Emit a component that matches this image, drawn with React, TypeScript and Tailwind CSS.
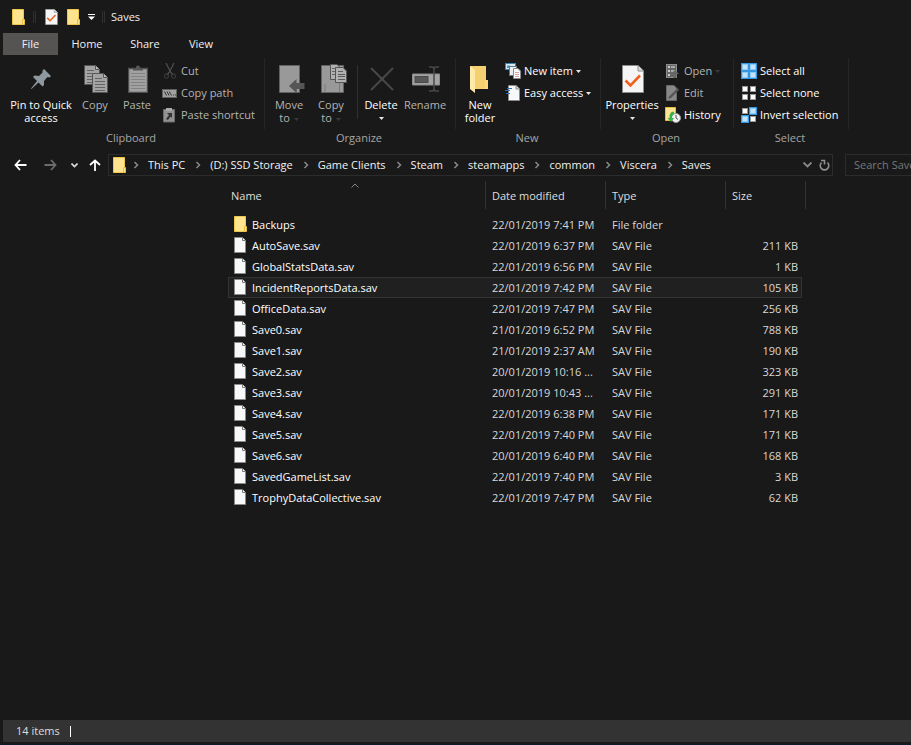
import { Fragment, type ReactNode } from "react";

const FONT = "font-['Open_Sans','Noto_Sans',sans-serif]";

function FolderIcon() {
  return (
    <svg width="14" height="16" viewBox="0 0 14 16" className="shrink-0" aria-hidden="true">
      <path d="M.5.5H11.500V15.500H.5Z" fill="#ffe490" stroke="#efc54a" />
      <path d="M10.500 10.500H12.500V15.500H10.500Z" fill="#ffe490" stroke="#e9bf40" />
    </svg>
  );
}

function FileIcon() {
  return (
    <svg width="12" height="16" viewBox="0 0 12 16" className="shrink-0" aria-hidden="true">
      <path d="M.5.5H8L11.500 3.500V15.500H.5Z" fill="#f7f8fa" stroke="#8a8a8a" />
      <path d="M8.500.5V3.500H11.500" fill="#fff" stroke="#777" />
    </svg>
  );
}

function CheckDocIcon({ width, height }: { width: number; height: number }) {
  return (
    <svg width={width} height={height} viewBox="0 0 22 28" className="shrink-0" aria-hidden="true">
      <path d="M.5.5H16L21.500 6V27.500H.5Z" fill="#f5f5f5" stroke="#8c8c8c" />
      <path d="M16 .5V6H21.500" fill="#ddd" stroke="#8c8c8c" />
      <path d="M3.500 15.500L8.500 20.500L18 10.500" fill="none" stroke="#f1601d" strokeWidth="2.600" />
    </svg>
  );
}

function PinIcon() {
  return (
    <svg width="24" height="22" viewBox="0 0 24 22" aria-hidden="true">
      <path d="M14 1L21 8L19.500 9.500L17.500 9L14 13L14 17L12.500 18.500L8.500 14.500L1.500 21L1 20.500L7 13L3 9L4.500 7.500L9 8L12.500 4.500L12.500 2.500Z" fill="#8d999f" />
    </svg>
  );
}

function Page({ x, y }: { x: number; y: number }) {
  return (
    <g transform={`translate(${x} ${y})`}>
      <path d="M.5.5H11.500L15.500 4.500V19.500H.5Z" fill="#a3a3a3" stroke="#555" />
      <path d="M11.500.5V4.500H15.500" fill="#bbb" stroke="#555" />
      <path d="M3 5.500H10M3 8.500H13M3 11.500H13M3 14.500H13M3 17.500H13" stroke="#646464" />
    </g>
  );
}

function CopyIcon() {
  return (
    <svg width="24" height="28" viewBox="0 0 24 28" aria-hidden="true">
      <Page x={0} y={0} />
      <Page x={8} y={8} />
    </svg>
  );
}

function PasteIcon() {
  return (
    <svg width="20" height="28" viewBox="0 0 20 28" aria-hidden="true">
      <path d="M.5 3.500H19.500V27.500H.5Z" fill="#a1a1a1" stroke="#4f4f4f" strokeWidth="1.500" />
      <path d="M5 5.500V3.500H8V1.500Q10 -.5 12 1.500V3.500H15V5.500Z" fill="#555" />
      <path d="M3 8.500H17M3 11.500H17M3 14.500H17M3 17.500H17M3 20.500H17M3 23.500H17" stroke="#828282" />
    </svg>
  );
}

function MoveToIcon() {
  return (
    <svg width="30" height="28" viewBox="-4 0 30 28" aria-hidden="true">
      <path d="M.5.5H20.500V27.500H.5Z" fill="#999" stroke="#626262" />
      <path d="M17.500 19V27" stroke="#777" />
      <path d="M10 21L17.500 14V18H25.500V24H17.500V28Z" fill="#555" />
    </svg>
  );
}

function CopyToIcon() {
  return (
    <svg width="30" height="30" viewBox="-4 0 30 30" aria-hidden="true">
      <path d="M.5 1.500H22.500V28.500H.5Z" fill="#999" stroke="#626262" />
      <path d="M4 20V28M18.500 19V28" stroke="#7b7b7b" />
      <path d="M9.500.5H16L19.500 4V15.500H9.500Z" fill="#b0b0b0" stroke="#555" />
      <path d="M11 4.500H15M11 7.500H15M11 10.500H15" stroke="#666" />
      <path d="M14.500 3.500H22L25.500 7V18.500H14.500Z" fill="#b0b0b0" stroke="#555" />
      <path d="M17 7.500H22M17 10.500H24M17 12.500H24M17 15.500H24" stroke="#5c5c5c" />
    </svg>
  );
}

function DeleteIcon() {
  return (
    <svg width="24" height="24" viewBox="0 0 24 24" aria-hidden="true">
      <path d="M1 1L23 23M23 1L1 23" stroke="#484848" strokeWidth="2" />
      <circle cx="12" cy="12" r="2" fill="#484848" />
    </svg>
  );
}

function RenameIcon() {
  return (
    <svg width="28" height="26" viewBox="0 0 28 26" aria-hidden="true">
      <path d="M.5 8H27.500V19H.5Z" fill="#a3a3a3" stroke="#8a8a8a" />
      <rect x="3" y="10.500" width="13" height="6" fill="#585858" stroke="#4a4a4a" />
      <path d="M17 1H20Q22 1 22 3.500Q22 1 24 1H27M22 3V23M17 25H20Q22 25 22 22.500Q22 25 24 25H27" fill="none" stroke="#484848" strokeWidth="1.500" />
    </svg>
  );
}

function NewFolderIcon() {
  return (
    <svg width="22" height="28" viewBox="0 0 22 28" aria-hidden="true">
      <path d="M0 1H16V15H18V24H0Z" fill="#f5d070" />
      <path d="M0 1L5 5V28L0 24Z" fill="#ffe9a6" />
      <path d="M16 15H18V24H15V16Z" fill="#ffd978" />
    </svg>
  );
}

function CutIcon() {
  return (
    <svg width="16" height="16" viewBox="0 0 16 16" aria-hidden="true">
      <path d="M4 0L8.500 9L11 12M12 0L7.500 9L5 12" fill="none" stroke="#505050" strokeWidth="1.200" />
      <ellipse cx="4.500" cy="13" rx="2" ry="2.300" fill="none" stroke="#404040" />
      <ellipse cx="11.500" cy="13" rx="2" ry="2.300" fill="none" stroke="#404040" />
    </svg>
  );
}

function CopyPathIcon() {
  return (
    <svg width="16" height="16" viewBox="0 0 16 16" aria-hidden="true">
      <rect x=".5" y="4.500" width="14" height="8" fill="#a0a0a0" stroke="#606060" />
      <path d="M2.500 6.500L4.500 10.500M5 6.500L7 10.500M7.500 6.500L8.500 9.500" stroke="#333" />
      <path d="M9 10H10M11 10H12M13 10H14" stroke="#333" />
    </svg>
  );
}

function PasteShortcutIcon() {
  return (
    <svg width="16" height="16" viewBox="0 0 16 16" aria-hidden="true">
      <path d="M1.500 2.500H12.500V15H1.500Z" fill="#929292" stroke="#6b6b6b" />
      <path d="M4 1H10V4H4Z" fill="#aaa" />
      <path d="M5 6H10V11L8.500 9.500L6 13L4 12L7 8Z" fill="#333" />
    </svg>
  );
}

function NewItemIcon() {
  return (
    <svg width="16" height="16" viewBox="0 0 16 16" aria-hidden="true">
      <rect x=".5" y=".5" width="10" height="6" fill="#d8e9f4" stroke="#3e82b0" />
      <path d="M2 2.500H5V5H2Z" fill="#4795c8" />
      <rect x="4.500" y="3.500" width="7" height="9" fill="#e8eef2" stroke="#667885" />
      <path d="M8.500 5.500H13L15.500 8V15.500H8.500Z" fill="#fafafa" stroke="#8a8a8a" />
      <path d="M10 9.500H14M10 11.500H14M10 13.500H14" stroke="#d5a0a7" />
    </svg>
  );
}

function EasyAccessIcon() {
  return (
    <svg width="16" height="16" viewBox="0 0 16 16" aria-hidden="true">
      <path d="M3.500.5H11L14.500 4V15.500H3.500Z" fill="#f7f8fa" stroke="#8c8c8c" />
      <path d="M11 .5V4H14.500" fill="#ddd" stroke="#8c8c8c" />
      <path d="M2 3.500H7M0 5.500H5M1 8.500H5" stroke="#2d70ad" />
    </svg>
  );
}

function OpenIcon() {
  return (
    <svg width="16" height="16" viewBox="0 0 16 16" aria-hidden="true">
      <rect x="1.500" y="1.500" width="10" height="13" fill="#666" stroke="#8d8d8d" />
      <path d="M3 4H5M3 8H5M3 12H5" stroke="#ccc" strokeWidth="2" />
      <path d="M6 4H10M6 8H10" stroke="#aaa" strokeWidth="2" />
      <path d="M10 7L14 11H11.500V15H8.500V11H6Z" fill="#666" />
    </svg>
  );
}

function EditIcon() {
  return (
    <svg width="16" height="16" viewBox="0 0 16 16" aria-hidden="true">
      <path d="M1.500.5H9L11.500 3V15.500H1.500Z" fill="#888" stroke="#696969" />
      <path d="M13 3L14 5L6 13L3.500 14L4 11.500Z" fill="#555" />
    </svg>
  );
}

function HistoryIcon() {
  return (
    <svg width="16" height="16" viewBox="0 0 16 16" aria-hidden="true">
      <path d="M.5.5H10.500V13.500H.5Z" fill="#ffe490" stroke="#e9bd38" />
      <circle cx="11" cy="11" r="4.500" fill="#f2f2f2" stroke="#999" />
      <path d="M11 8V11L13 12.500" fill="none" stroke="#555" />
      <path d="M8.500 4.500Q4 5 4.500 11H2.500L6 15L9 11H7Q6.500 7.500 9.500 6.500Z" fill="#31b54a" />
    </svg>
  );
}

function SelectIcon({ picked }: { picked: "all" | "none" | "some" }) {
  const tiles = [[0, 0], [8, 0], [0, 8], [8, 8]];
  return (
    <svg width="16" height="16" viewBox="0 0 16 16" aria-hidden="true" shapeRendering="crispEdges">
      {tiles.map(([x, y], i) => {
        const on = picked === "all" || (picked === "some" && (i === 1 || i === 2));
        return (
          <g key={i}>
            {on && <rect x={x} y={y} width="8" height="8" fill="#3397e2" />}
            <rect x={x + 1} y={y + 1} width="6" height="6" fill={on ? "#8fcaf5" : "#999"} />
            <rect x={x + 2} y={y + 2} width="4" height="4" fill={on ? "#c4e4fc" : "#fff"} />
          </g>
        );
      })}
    </svg>
  );
}

function Caret({ dim = false }: { dim?: boolean }) {
  return (
    <svg width="5" height="3" viewBox="0 0 5 3" className={`inline-block ${dim ? "text-[#3a3a3a]" : "text-[#e8e8e8]"}`} aria-hidden="true">
      <path d="M0 0H5L2.500 3Z" fill="currentColor" />
    </svg>
  );
}

function Big({ icon, lines, width, off = false, caret }: { icon: ReactNode; lines: string[]; width: string; off?: boolean; caret?: "own" | "side" }) {
  return (
    <button type="button" className={`flex shrink-0 flex-col items-center whitespace-nowrap pt-[5px] leading-[13px] ${width} ${off ? "text-[#b4b4b4]" : "text-white"}`}>
      <span className="mb-[3px] flex h-8 items-center justify-center pl-[2px]">{icon}</span>
      <span className="text-center">
        {lines.map((line, i) => (
          <Fragment key={line}>
            {i > 0 && <br />}
            {line}
          </Fragment>
        ))}
        {caret === "side" && <span className="ml-1"><Caret dim /></span>}
      </span>
      {caret === "own" && <span className="flex h-[14px] items-center"><Caret /></span>}
    </button>
  );
}

function Small({ icon, label, off = false, caret }: { icon: ReactNode; label: string; off?: boolean; caret?: "dim" | "lit" }) {
  return (
    <button type="button" className={`flex h-[22px] items-center gap-[3px] whitespace-nowrap ${off ? "text-[#b4b4b4]" : "text-white"}`}>
      {icon}
      <span>{label}</span>
      {caret && <span className="flex"><Caret dim={caret === "dim"} /></span>}
    </button>
  );
}

function Group({ name, width, children }: { name: string; width: string; children: ReactNode }) {
  return (
    <section aria-label={name} className={`shrink-0 ${width}`}>
      <div className="flex h-[71px] border-r border-[#262626]">{children}</div>
      <div className="mt-px h-4 pr-[3px] text-center leading-4 text-[#a6a6a6]">{name}</div>
    </section>
  );
}

function Chevron() {
  return (
    <svg width="25" height="8" viewBox="0 0 25 8" className="shrink-0" aria-hidden="true">
      <path d="M11.500 1L14.500 4L11.500 7" fill="none" stroke="#888" strokeWidth="1.500" />
    </svg>
  );
}

const crumbs = ["This PC", "(D:) SSD Storage", "Game Clients", "Steam", "steamapps", "common", "Viscera", "Saves"];

const files = [
  ["Backups", "22/01/2019 7:41 PM", "File folder", ""],
  ["AutoSave.sav", "22/01/2019 6:37 PM", "SAV File", "211 KB"],
  ["GlobalStatsData.sav", "22/01/2019 6:56 PM", "SAV File", "1 KB"],
  ["IncidentReportsData.sav", "22/01/2019 7:42 PM", "SAV File", "105 KB"],
  ["OfficeData.sav", "22/01/2019 7:47 PM", "SAV File", "256 KB"],
  ["Save0.sav", "21/01/2019 6:52 PM", "SAV File", "788 KB"],
  ["Save1.sav", "21/01/2019 2:37 AM", "SAV File", "190 KB"],
  ["Save2.sav", "20/01/2019 10:16 ...", "SAV File", "323 KB"],
  ["Save3.sav", "20/01/2019 10:43 ...", "SAV File", "291 KB"],
  ["Save4.sav", "22/01/2019 6:38 PM", "SAV File", "171 KB"],
  ["Save5.sav", "22/01/2019 7:40 PM", "SAV File", "171 KB"],
  ["Save6.sav", "20/01/2019 6:40 PM", "SAV File", "168 KB"],
  ["SavedGameList.sav", "22/01/2019 7:40 PM", "SAV File", "3 KB"],
  ["TrophyDataCollective.sav", "22/01/2019 7:47 PM", "SAV File", "62 KB"],
];

function TitleBar() {
  return (
    <header className="flex h-[33px] items-center pl-3">
      <FolderIcon />
      <span className="ml-[7px] h-3 w-[3px] border-x border-[#303030]" />
      <button type="button" aria-label="Properties" className="ml-[9px]"><CheckDocIcon width={13} height={16} /></button>
      <button type="button" aria-label="New folder" className="ml-[9px]"><FolderIcon /></button>
      <button type="button" aria-label="Customize toolbar" className="ml-[7px]">
        <svg width="7" height="6" viewBox="0 0 7 6" aria-hidden="true"><path d="M0 .5H7" stroke="#fff" /><path d="M0 2.500H7L3.500 6Z" fill="#fff" /></svg>
      </button>
      <span className="ml-[7px] h-3 w-[3px] border-x border-[#303030]" />
      <h1 className="ml-[6px]">Saves</h1>
    </header>
  );
}

function Ribbon() {
  return (
    <div className="flex h-[95px] pt-[3px]">
      <Group name="Clipboard" width="w-[265px]">
        <div className="flex pl-[6px]">
          <Big width="w-[70px]" icon={<PinIcon />} lines={["Pin to Quick", "access"]} />
          <Big width="w-[38px]" icon={<CopyIcon />} lines={["Copy"]} off />
          <Big width="w-[46px]" icon={<PasteIcon />} lines={["Paste"]} off />
        </div>
        <div className="pl-[2px] pt-[2px]">
          <Small icon={<CutIcon />} label="Cut" off />
          <Small icon={<CopyPathIcon />} label="Copy path" off />
          <Small icon={<PasteShortcutIcon />} label="Paste shortcut" off />
        </div>
      </Group>
      <Group name="Organize" width="w-[191px]">
        <div className="flex pl-[3px]">
          <Big width="w-[42px]" icon={<MoveToIcon />} lines={["Move", "to"]} caret="side" off />
          <Big width="w-[42px]" icon={<CopyToIcon />} lines={["Copy", "to"]} caret="side" off />
          <span className="ml-[5px] mt-[7px] h-[54px] w-px bg-[#303030]" />
          <Big width="w-[46px]" icon={<DeleteIcon />} lines={["Delete"]} caret="own" />
          <Big width="w-[42px]" icon={<RenameIcon />} lines={["Rename"]} off />
        </div>
      </Group>
      <Group name="New" width="w-[145px]">
        <div className="pl-[3px]">
          <Big width="w-[42px]" icon={<NewFolderIcon />} lines={["New", "folder"]} />
        </div>
        <div className="pl-1 pt-[2px]">
          <Small icon={<NewItemIcon />} label="New item" caret="lit" />
          <Small icon={<EasyAccessIcon />} label="Easy access" caret="lit" />
        </div>
      </Group>
      <Group name="Open" width="w-[133px]">
        <div className="pl-1">
          <Big width="w-[54px]" icon={<CheckDocIcon width={22} height={28} />} lines={["Properties"]} caret="own" />
        </div>
        <div className="pl-[6px] pt-[2px]">
          <Small icon={<OpenIcon />} label="Open" caret="dim" off />
          <Small icon={<EditIcon />} label="Edit" off />
          <Small icon={<HistoryIcon />} label="History" />
        </div>
      </Group>
      <Group name="Select" width="w-[115px]">
        <div className="pl-[7px] pt-[2px]">
          <Small icon={<SelectIcon picked="all" />} label="Select all" />
          <Small icon={<SelectIcon picked="none" />} label="Select none" />
          <Small icon={<SelectIcon picked="some" />} label="Invert selection" />
        </div>
      </Group>
    </div>
  );
}

function AddressBar() {
  return (
    <div className="mt-1 flex h-[22px] items-center">
      <div className="flex w-[108px] shrink-0 items-center pl-[14px]">
        <button type="button" aria-label="Back">
          <svg width="13" height="12" viewBox="0 0 13 12" aria-hidden="true"><path d="M6 1L1.500 6L6 11M1.500 6H12.500" fill="none" stroke="#fff" strokeWidth="1.800" /></svg>
        </button>
        <button type="button" aria-label="Forward" className="ml-[17px]">
          <svg width="13" height="12" viewBox="0 0 13 12" aria-hidden="true"><path d="M7 1L11.500 6L7 11M11.500 6H.5" fill="none" stroke="#6c6c6c" strokeWidth="1.800" /></svg>
        </button>
        <button type="button" aria-label="Recent locations" className="ml-[14px]">
          <svg width="7" height="5" viewBox="0 0 7 5" aria-hidden="true"><path d="M.5.5L3.500 3.500L6.500.5" fill="none" stroke="#ddd" strokeWidth="1.600" /></svg>
        </button>
        <button type="button" aria-label="Up" className="ml-[11px]">
          <svg width="12" height="12" viewBox="0 0 12 12" aria-hidden="true"><path d="M1 6L6 1.500L11 6M6 1.500V12" fill="none" stroke="#fff" strokeWidth="1.800" /></svg>
        </button>
      </div>
      <nav aria-label="Location" className="flex h-full min-w-0 flex-1 items-center border border-[#2c2c2c] pl-1">
        <FolderIcon />
        <ol className="-ml-1 flex items-center whitespace-nowrap">
          {crumbs.map((name) => (
            <li key={name} className="flex items-center">
              <Chevron />
              <a href="#" className="text-[#f2f2f2]">{name}</a>
            </li>
          ))}
        </ol>
        <button type="button" aria-label="Previous locations" className="ml-auto">
          <svg width="9" height="6" viewBox="0 0 9 6" aria-hidden="true"><path d="M.5.5L4.500 4.500L8.500.5" fill="none" stroke="#8a8a8a" strokeWidth="1.800" /></svg>
        </button>
        <button type="button" aria-label="Refresh" className="ml-[7px] mr-[2px]">
          <svg width="11" height="12" viewBox="0 0 11 12" aria-hidden="true"><path d="M2.500 3.500A4.300 4.300 0 1 0 8.500 3.500M2 1.500H5.500V5.500" fill="none" stroke="#8f8f8f" strokeWidth="1.600" /></svg>
        </button>
      </nav>
      <input aria-label="Search Saves" placeholder="Search Saves" className="ml-3 h-full w-[66px] border border-r-0 border-[#2c2c2c] bg-transparent pb-px pl-2 outline-none placeholder:text-[#777777]" />
    </div>
  );
}

function FileTable() {
  return (
    <main className="flex-1 pl-[228px]">
      <table className="mt-[5px] w-[578px] table-fixed border-separate border-spacing-0 text-left whitespace-nowrap text-[#d8d8d8]">
        <colgroup>
          <col className="w-[258px]" />
          <col className="w-[120px]" />
          <col className="w-[120px]" />
          <col className="w-[76px]" />
          <col className="w-1" />
        </colgroup>
        <thead>
          <tr className="h-7 text-[#dedede]">
            <th className="relative border-r border-[#333] p-0 pl-[3px] pt-[2px] font-normal">
              Name
              <svg width="8" height="5" viewBox="0 0 8 5" className="absolute left-[123px] top-[2px]" aria-hidden="true"><path d="M.5 4.500L4 1L7.500 4.500" fill="none" stroke="#888" /></svg>
            </th>
            <th className="border-r border-[#333] p-0 pl-[6px] pt-[2px] font-normal">Date modified</th>
            <th className="border-r border-[#333] p-0 pl-[6px] pt-[2px] font-normal">Type</th>
            <th colSpan={2} className="border-r border-[#333] p-0 pl-[6px] pt-[2px] font-normal">Size</th>
          </tr>
        </thead>
        <tbody>
          <tr className="h-[5px]"><td colSpan={5} className="p-0" /></tr>
          {files.map(([name, date, type, size]) => {
            const lit = name === "IncidentReportsData.sav";
            const edge = lit ? "border-y border-[#333] bg-[#202020]" : "border-y border-transparent";
            return (
              <tr key={name} className="h-[21px] leading-[19px]">
                <td className={`border-l p-0 pl-[5px] text-white ${edge}`}>
                  <span className="flex items-start">
                    <span className="w-[18px] pt-px">{type === "File folder" ? <FolderIcon /> : <FileIcon />}</span>
                    {name}
                  </span>
                </td>
                <td className={`p-0 pl-[6px] ${edge}`}>{date}</td>
                <td className={`p-0 pl-[6px] ${edge}`}>{type}</td>
                <td className={`border-r p-0 pr-[3px] text-right ${edge}`}>{size}</td>
                <td className="p-0" />
              </tr>
            );
          })}
        </tbody>
      </table>
    </main>
  );
}

export default function App() {
  return (
    <div className={`flex min-h-screen flex-col overflow-hidden bg-[#191919] text-[11px] leading-4 text-[#f0f0f0] ${FONT}`}>
      <TitleBar />
      <nav aria-label="Ribbon tabs" className="flex h-[22px] pl-[3px]">
        <button type="button" className="w-[55px] bg-[#555453]">File</button>
        <button type="button" className="w-[58px]">Home</button>
        <button type="button" className="w-[58px]">Share</button>
        <button type="button" className="w-[54px]">View</button>
      </nav>
      <Ribbon />
      <AddressBar />
      <FileTable />
      <footer className="mb-[2px] ml-[3px] flex h-[22px] items-center bg-[#333] pl-[13px] text-[#dedede]">
        <span>14 items</span>
        <span className="ml-[10px] h-[11px] w-px bg-white" />
      </footer>
      <div className="h-px bg-[#0e1c2a]" />
    </div>
  );
}
